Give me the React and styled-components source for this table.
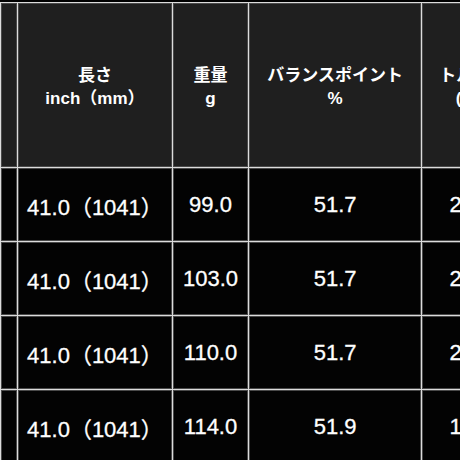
import styled, { createGlobalStyle } from "styled-components";

const GlobalStyle = createGlobalStyle`
    html, body {
        margin: 0;
        padding: 0;
        background: #000;
        overflow: hidden;
    }
    body {
        font-family: "Liberation Sans", "Noto Sans CJK JP", sans-serif;
        color: #fff;
    }
`;

const Viewport = styled.div`
    width: 460px;
    height: 460px;
    overflow: hidden;
    padding-top: 2px;
    box-sizing: border-box;
`;

const Table = styled.table`
    border-collapse: separate;
    border-spacing: 1px;
    background: #dcdcdc;
    table-layout: fixed;
    width: 620px;
`;

const Col = styled.col`
    width: ${props => props.$w}px;
`;

const HeadCell = styled.th`
    box-sizing: border-box;
    height: 164px;
    padding: 4px 0 0;
    background: #1f1f1f;
    border: 1px solid #4a4a4a;
    font-size: 17px;
    line-height: 23px;
    font-weight: bold;
    text-align: center;
    vertical-align: middle;
    white-space: nowrap;
    overflow: hidden;
`;

const BodyCell = styled.td`
    box-sizing: border-box;
    height: 73px;
    padding: 0;
    background: #030303;
    border: 1px solid #4a4a4a;
    font-size: 22px;
    font-weight: normal;
    text-align: center;
    vertical-align: middle;
    white-space: nowrap;
    overflow: hidden;
    -webkit-text-stroke: 0.3px #fff;
`;

const columns = [
    { w: 16, label: [] },
    { w: 153, label: ['長さ', 'inch（mm）'] },
    { w: 75, label: ['重量', 'g'] },
    { w: 171, label: ['バランスポイント', '%'] },
    { w: 85, label: ['トルク', '(°)'] },
    { w: 110, label: ['キックポイント', ''] },
];

const rows = [
    ['', '41.0（1041）', '99.0', '51.7', '2.8', ''],
    ['', '41.0（1041）', '103.0', '51.7', '2.6', ''],
    ['', '41.0（1041）', '110.0', '51.7', '2.4', ''],
    ['', '41.0（1041）', '114.0', '51.9', '1.9', ''],
    ['', '41.0（1041）', '118.0', '51.9', '1.8', ''],
];

const App = () => {
    return (
        <>
            <GlobalStyle />
            <Viewport>
                <Table>
                    <colgroup>
                        {columns.map((c, i) => <Col key={i} $w={c.w} />)}
                    </colgroup>
                    <thead>
                        <tr>
                            {columns.map((c, i) => (
                                <HeadCell key={i}>
                                    {c.label.map((line, j) => (
                                        <div key={j}>{line}</div>
                                    ))}
                                </HeadCell>
                            ))}
                        </tr>
                    </thead>
                    <tbody>
                        {rows.map((r, i) => (
                            <tr key={i}>
                                {r.map((v, j) => <BodyCell key={j}>{v}</BodyCell>)}
                            </tr>
                        ))}
                    </tbody>
                </Table>
            </Viewport>
        </>
    )
}

export default App
